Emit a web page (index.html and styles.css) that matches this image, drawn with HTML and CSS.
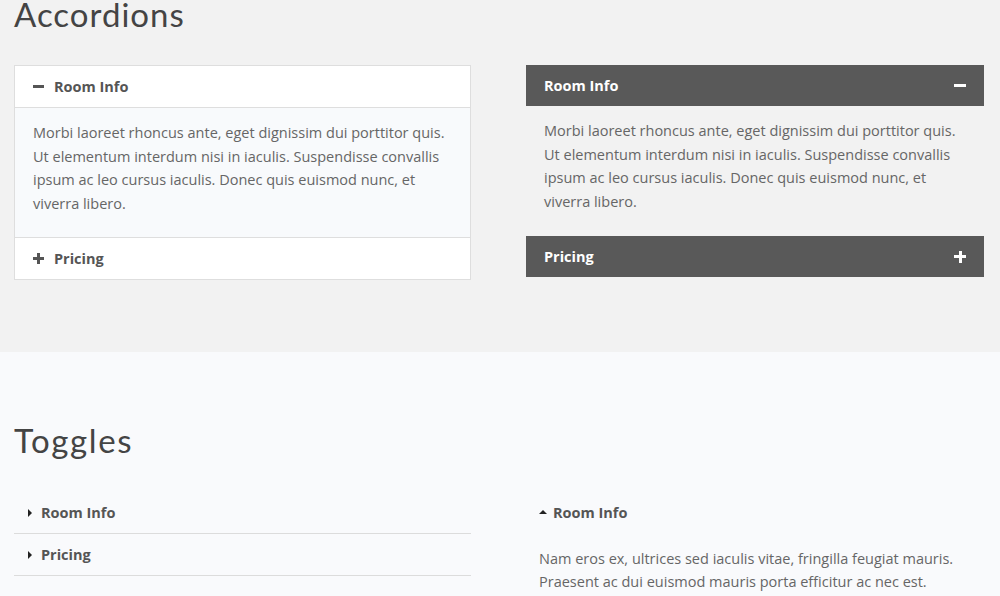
FILE: index.html
```html
<!DOCTYPE html>
<html>
<head>
<meta charset="utf-8">
<link rel="stylesheet" href="styles.css">
</head>
<body>
<section class="sec sec-acc">
  <h2 class="title">Accordions</h2>
  <div class="cols">
    <div class="acc acc-light">
      <div class="acc-head open"><span class="ico minus"></span><span class="label">Room Info</span></div>
      <div class="acc-body">Morbi laoreet rhoncus ante, eget dignissim dui porttitor quis. Ut elementum interdum nisi in iaculis. Suspendisse convallis ipsum ac leo cursus iaculis. Donec quis euismod nunc, et viverra libero.</div>
      <div class="acc-head"><span class="ico plus"></span><span class="label">Pricing</span></div>
    </div>
    <div class="acc acc-dark">
      <div class="acc-head open"><span class="label">Room Info</span><span class="ico minus"></span></div>
      <div class="acc-body">Morbi laoreet rhoncus ante, eget dignissim dui porttitor quis. Ut elementum interdum nisi in iaculis. Suspendisse convallis ipsum ac leo cursus iaculis. Donec quis euismod nunc, et viverra libero.</div>
      <div class="acc-head"><span class="label">Pricing</span><span class="ico plus"></span></div>
    </div>
  </div>
</section>
<section class="sec sec-tog">
  <h2 class="title">Toggles</h2>
  <div class="cols">
    <div class="tog">
      <div class="tog-item"><span class="tri tri-right"></span><span class="label">Room Info</span></div>
      <div class="tog-item"><span class="tri tri-right"></span><span class="label">Pricing</span></div>
    </div>
    <div class="tog tog-open">
      <div class="tog-item open"><span class="tri tri-up"></span><span class="label">Room Info</span></div>
      <div class="tog-body">Nam eros ex, ultrices sed iaculis vitae, fringilla feugiat mauris. Praesent ac dui euismod mauris porta efficitur ac nec est.</div>
    </div>
  </div>
</section>
</body>
</html>
```
FILE: styles.css
```css
html, body {
  margin: 0;
  padding: 0;
}
body {
  font-family: "Open Sans", "Liberation Sans", sans-serif;
  color: #666;
  width: 1000px;
  height: 596px;
  overflow: hidden;
}
.sec {
  padding: 0 16px 0 14px;
}
.sec-acc {
  background: #f2f2f2;
  height: 352px;
  box-sizing: border-box;
}
.sec-tog {
  background: #f9fafc;
  padding-top: 74px;
  height: 244px;
  box-sizing: border-box;
}
.title {
  font-family: Lato, "Open Sans", sans-serif;
  font-weight: 400;
  font-size: 33px;
  line-height: 28px;
  color: #444;
  margin: 0 0 37px;
  letter-spacing: 1px;
}
.sec-tog .title {
  margin-bottom: 38px;
  letter-spacing: 1.6px;
}
.cols {
  display: grid;
  grid-template-columns: 457px 458px;
  column-gap: 55px;
  align-items: start;
}
.label {
  font-weight: 700;
  font-size: 14.5px;
}
.acc-body, .tog-body {
  font-size: 14.5px;
  line-height: 23.5px;
}

/* light accordion */
.acc-light {
  border: 1px solid #dedede;
  background: #fff;
}
.acc-light .acc-head {
  display: flex;
  align-items: center;
  height: 41px;
  padding: 0 18px;
  color: #555;
  gap: 10px;
}
.acc-light .acc-head.open {
  border-bottom: 1px solid #dedede;
}
.acc-light .acc-body {
  background: #f8fafc;
  padding: 13px 18px 22px;
  border-bottom: 1px solid #dedede;
}

/* icons */
.ico {
  position: relative;
  width: 11px;
  height: 11px;
  flex: none;
}
.ico::before, .ico::after {
  content: "";
  position: absolute;
  background: currentColor;
}
.ico::before {
  left: 0;
  right: 0;
  top: 4px;
  height: 3px;
}
.ico.plus::after {
  top: 0;
  bottom: 0;
  left: 4px;
  width: 3px;
}

/* dark accordion */
.acc-dark .acc-head {
  display: flex;
  align-items: center;
  justify-content: space-between;
  height: 41px;
  padding: 0 18px;
  background: #595959;
  color: #fff;
}
.acc-dark .acc-head .ico {
  width: 12px;
  height: 12px;
}
.acc-dark .acc-head .ico::before {
  top: 4.5px;
}
.acc-dark .acc-head .ico.plus::after {
  left: 4.5px;
}
.acc-dark .acc-body {
  padding: 13px 18px 23px;
}

/* toggles */
.tog-item {
  display: flex;
  align-items: center;
  height: 41px;
  border-bottom: 1px solid #dcdcdc;
  padding-left: 14px;
  color: #555;
}
.tog-item .tri {
  width: 0;
  height: 0;
  margin-right: 9px;
}
.tri-right {
  border-top: 4px solid transparent;
  border-bottom: 4px solid transparent;
  border-left: 4px solid #222;
}
.tog-open .tog-item {
  border-bottom: none;
  padding-left: 13px;
}
.tri-up {
  border-left: 4px solid transparent;
  border-right: 4px solid transparent;
  border-bottom: 4px solid #222;
  margin-right: 6px !important;
  margin-top: -2px;
}
.tog-body {
  padding: 14px 13px 0;
  line-height: 23px;
}
```
